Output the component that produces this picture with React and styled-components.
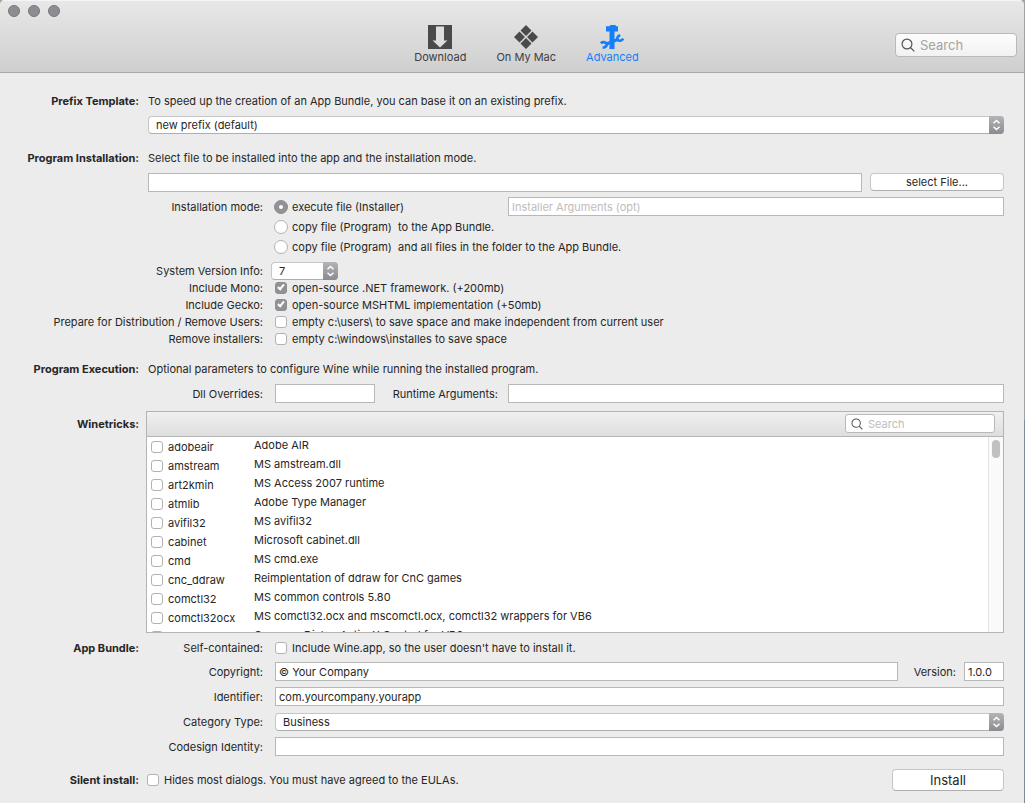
import React, { useState } from "react";
import styled, { createGlobalStyle, css } from "styled-components";

const TRICKS = [
    ["adobeair", "Adobe AIR"],
    ["amstream", "MS amstream.dll"],
    ["art2kmin", "MS Access 2007 runtime"],
    ["atmlib", "Adobe Type Manager"],
    ["avifil32", "MS avifil32"],
    ["cabinet", "Microsoft cabinet.dll"],
    ["cmd", "MS cmd.exe"],
    ["cnc_ddraw", "Reimplentation of ddraw for CnC games"],
    ["comctl32", "MS common controls 5.80"],
    ["comctl32ocx", "MS comctl32.ocx and mscomctl.ocx, comctl32 wrappers for VB6"],
    ["comdlg32ocx", "Common Dialog ActiveX Control for VB6"],
];

const DownloadIcon = () => (
    <svg width="24" height="24" viewBox="0 0 24 24" aria-hidden="true">
        <rect width="24" height="24" fill="#4a4a4a" />
        <path d="M8 1.500h8v14h3.500L12 22.500 4.500 15.500H8z" fill="#dedede" />
    </svg>
);

const MacIcon = () => (
    <svg width="24" height="24" viewBox="0 0 24 24" aria-hidden="true">
        <path
            d="M12 0l5.500 5.500L12 11 6.500 5.500zM5.500 6.500L11 12l-5.500 5.500L0 12zM18.500 6.500L24 12l-5.500 5.500L13 12zM12 13l5.500 5.500L12 24l-5.500-5.500z"
            fill="#4a4a4a"
        />
    </svg>
);

const AdvancedIcon = () => (
    <svg width="24" height="24" viewBox="0 0 24 24" fill="none" stroke="#157efb" aria-hidden="true">
        <path d="M6 1.200h3.500L10.500 0h5l.5 1.200h2V6.500h-3.500V24h-5V6.500H6z" fill="#157efb" stroke="none" />
        <path d="M6.500 19L17.500 14.500" strokeWidth="3" />
        <path d="M.8 18.300C2.500 16.600 5.600 16.600 6.400 18.800S5.500 22.600 2.600 22.700" strokeWidth="2.600" />
        <path d="M20.300 10.200C17.800 10.700 16.800 12.800 17.800 14.600S21.500 16.300 23.200 13.600" strokeWidth="2.600" />
    </svg>
);

const SearchIcon = ({ size }) => (
    <svg width={size} height={size} viewBox="0 0 14 14" fill="none" stroke="#555" strokeWidth="1.2" aria-hidden="true">
        <circle cx="6" cy="6" r="4.900" />
        <path d="M9.500 9.500L13.300 13.300" />
    </svg>
);

const Popup = ({ children, ...props }) => (
    <PopupWrap>
        <select {...props}>{children}</select>
        <PopupArrows>
            <svg width="9" height="12" viewBox="0 0 9 12" fill="none" stroke="#fff" strokeWidth="1.500" aria-hidden="true">
                <path d="M1.500 4.300L4.500 1.500l3 2.800M1.500 7.700l3 2.800 3-2.800" />
            </svg>
        </PopupArrows>
    </PopupWrap>
);

const App = () => {
    const [tab, setTab] = useState("advanced");
    const [mode, setMode] = useState("execute");

    return (
        <Window>
            <GlobalStyle />
            <TitleBar>
                <Lights>
                    <Light aria-label="Close" />
                    <Light aria-label="Minimize" />
                    <Light aria-label="Zoom" />
                </Lights>
                <Toolbar>
                    <Tools>
                        <Tool $active={tab === "download"} onClick={() => setTab("download")}>
                            <DownloadIcon />
                            Download
                        </Tool>
                        <Tool $active={tab === "mac"} onClick={() => setTab("mac")}>
                            <MacIcon />
                            On My Mac
                        </Tool>
                        <Tool $active={tab === "advanced"} onClick={() => setTab("advanced")}>
                            <AdvancedIcon />
                            Advanced
                        </Tool>
                    </Tools>
                    <SearchBox>
                        <SearchIcon size={14} />
                        <input type="search" placeholder="Search" aria-label="Search" />
                    </SearchBox>
                </Toolbar>
            </TitleBar>

            <Form onSubmit={(e) => e.preventDefault()}>
                <TitleRow>
                    <Title as="label" htmlFor="template">Prefix Template:</Title>
                    <p>To speed up the creation of an App Bundle, you can base it on an existing prefix.</p>
                </TitleRow>
                <WideRow $top={4}>
                    <Popup id="template">
                        <option>new prefix (default)</option>
                    </Popup>
                </WideRow>

                <TitleRow $top={13}>
                    <Title as="label" htmlFor="file">Program Installation:</Title>
                    <p>Select file to be installed into the app and the installation mode.</p>
                </TitleRow>
                <WideRow $top={5}>
                    <FileLine>
                        <TextField id="file" type="text" />
                        <Button type="button">select File...</Button>
                    </FileLine>
                </WideRow>

                <FieldRow $top={4}>
                    <Label as="span">Installation mode:</Label>
                    <ModeLine>
                        <Check>
                            <Radio name="mode" checked={mode === "execute"} onChange={() => setMode("execute")} />
                            execute file (Installer)
                        </Check>
                        <TextField type="text" placeholder="Installer Arguments (opt)" aria-label="Installer Arguments" />
                    </ModeLine>
                </FieldRow>
                <FieldRow>
                    <Label as="span" />
                    <Check>
                        <Radio name="mode" checked={mode === "copy"} onChange={() => setMode("copy")} />
                        {"copy file (Program)  to the App Bundle."}
                    </Check>
                </FieldRow>
                <FieldRow>
                    <Label as="span" />
                    <Check>
                        <Radio name="mode" checked={mode === "folder"} onChange={() => setMode("folder")} />
                        {"copy file (Program)  and all files in the folder to the App Bundle."}
                    </Check>
                </FieldRow>

                <FieldRow $top={4} $gap={8}>
                    <Label htmlFor="version-info">System Version Info:</Label>
                    <Narrow>
                        <Popup id="version-info">
                            <option>7</option>
                        </Popup>
                    </Narrow>
                </FieldRow>
                <Options>
                    <FieldRow $dense>
                        <Label htmlFor="mono">Include Mono:</Label>
                        <Check><Box id="mono" defaultChecked />open-source .NET framework. (+200mb)</Check>
                    </FieldRow>
                    <FieldRow $dense>
                        <Label htmlFor="gecko">Include Gecko:</Label>
                        <Check><Box id="gecko" defaultChecked />open-source MSHTML implementation (+50mb)</Check>
                    </FieldRow>
                    <FieldRow $dense>
                        <Label htmlFor="users">Prepare for Distribution / Remove Users:</Label>
                        <Check><Box id="users" />{"empty c:\\users\\ to save space and make independent from current user"}</Check>
                    </FieldRow>
                    <FieldRow $dense>
                        <Label htmlFor="installers">Remove installers:</Label>
                        <Check><Box id="installers" />{"empty c:\\windows\\installes to save space"}</Check>
                    </FieldRow>
                </Options>

                <TitleRow $top={12}>
                    <Title>Program Execution:</Title>
                    <p>Optional parameters to configure Wine while running the installed program.</p>
                </TitleRow>
                <FieldRow $top={5}>
                    <Label htmlFor="dll">Dll Overrides:</Label>
                    <ExecLine>
                        <TextField id="dll" type="text" />
                        <Label htmlFor="runtime">Runtime Arguments:</Label>
                        <TextField id="runtime" type="text" />
                    </ExecLine>
                </FieldRow>

                <TitleRow $top={7} $gap={7} $align="start">
                    <TricksTitle>Winetricks:</TricksTitle>
                    <Tricks>
                        <TricksHead>
                            <SearchBox $small>
                                <SearchIcon size={12} />
                                <input type="search" placeholder="Search" aria-label="Search winetricks" />
                            </SearchBox>
                        </TricksHead>
                        <TricksBody>
                            <TricksTable>
                                <tbody>
                                    {TRICKS.map(([name, text]) => (
                                        <tr key={name}>
                                            <td><Check><Box />{name}</Check></td>
                                            <td>{text}</td>
                                        </tr>
                                    ))}
                                </tbody>
                            </TricksTable>
                            <Track><Thumb /></Track>
                        </TricksBody>
                    </Tricks>
                </TitleRow>

                <BundleRow $top={5}>
                    <Title>App Bundle:</Title>
                    <Label htmlFor="self">Self-contained:</Label>
                    <Check><Box id="self" />Include Wine.app, so the user doesn't have to install it.</Check>
                </BundleRow>
                <FieldRow $top={4}>
                    <Label htmlFor="copyright">Copyright:</Label>
                    <VersionLine>
                        <TextField id="copyright" type="text" defaultValue="© Your Company" />
                        <Label htmlFor="version">Version:</Label>
                        <TextField id="version" type="text" defaultValue="1.0.0" />
                    </VersionLine>
                </FieldRow>
                <FieldRow $top={5}>
                    <Label htmlFor="identifier">Identifier:</Label>
                    <TextField id="identifier" type="text" defaultValue="com.yourcompany.yourapp" />
                </FieldRow>
                <FieldRow $top={5}>
                    <Label htmlFor="category">Category Type:</Label>
                    <Popup id="category">
                        <option>Business</option>
                    </Popup>
                </FieldRow>
                <FieldRow $top={5}>
                    <Label htmlFor="codesign">Codesign Identity:</Label>
                    <TextField id="codesign" type="text" />
                </FieldRow>

                <TitleRow $top={12} $gap={8}>
                    <Title as="label" htmlFor="silent">Silent install:</Title>
                    <InstallLine>
                        <Check><Box id="silent" />Hides most dialogs. You must have agreed to the EULAs.</Check>
                        <Button type="submit" $large>Install</Button>
                    </InstallLine>
                </TitleRow>
            </Form>
        </Window>
    );
};

export default App;

const GlobalStyle = createGlobalStyle`
    * {
        box-sizing: border-box;
    }
    body {
        margin: 0;
        background: linear-gradient(#a3a3a3 420px, #7d8b9b 420px);
        color: #262626;
        font: 11px/14px Inter, "Liberation Sans", sans-serif;
    }
    p {
        margin: 0;
    }
    button, input, select {
        font: inherit;
        color: inherit;
    }
`;

const Window = styled.div`
    margin-right: 1px;
    min-height: 100vh;
    background: #ececec;
    border-radius: 5px 5px 0 0;
    overflow: hidden;
`;

const TitleBar = styled.header`
    padding-bottom: 8px;
    background: linear-gradient(#e8e8e8, #cfcfcf);
    border-bottom: 1px solid #a8a8a8;
    box-shadow: inset 0 1px #f6f6f6;
`;

const Lights = styled.div`
    display: flex;
    gap: 8px;
    height: 25px;
    padding: 5px 8px;
`;

const Light = styled.button`
    width: 12px;
    height: 12px;
    padding: 0;
    border: 1px solid #77767b;
    border-radius: 50%;
    background: #8e8d92;
`;

const Toolbar = styled.div`
    display: grid;
    grid-template-columns: 1fr auto 1fr;
    align-items: center;
    padding: 0 7px 0 36px;
`;

const Tools = styled.nav`
    grid-column: 2;
    display: flex;
    gap: 30px;
`;

const Tool = styled.button`
    display: flex;
    flex-direction: column;
    align-items: center;
    gap: 1px;
    padding: 0;
    border: 0;
    background: none;
    color: ${({ $active }) => ($active ? "#157efb" : "#404040")};
`;

const SearchBox = styled.div`
    justify-self: end;
    display: flex;
    align-items: center;
    gap: 5px;
    width: ${({ $small }) => ($small ? 150 : 122)}px;
    height: ${({ $small }) => ($small ? 19 : 24)}px;
    padding: 0 5px;
    border: 1px solid #b9b9b9;
    border-radius: ${({ $small }) => ($small ? 3 : 4)}px;
    background: ${({ $small }) => ($small ? "#fff" : "linear-gradient(#fdfdfd, #f2f2f2)")};

    svg {
        flex: none;
    }
    input {
        min-width: 0;
        flex: 1;
        padding: 0;
        border: 0;
        outline: 0;
        background: none;
        font-size: ${({ $small }) => ($small ? 11 : 13)}px;
    }
    input::placeholder {
        color: ${({ $small }) => ($small ? "#bdbdbd" : "#a3a3a3")};
    }
`;

const Form = styled.form`
    padding: 18px 20px 12px 0;
`;

const Row = styled.div`
    display: grid;
    align-items: ${({ $align }) => $align || "center"};
    min-height: ${({ $dense }) => ($dense ? 17 : 20)}px;
    margin-top: ${({ $top }) => $top || 0}px;
`;

const TitleRow = styled(Row)`
    grid-template-columns: 139px 1fr;
    column-gap: ${({ $gap }) => $gap || 9}px;
`;

const WideRow = styled(Row)`
    padding-left: 148px;
`;

const FieldRow = styled(Row)`
    grid-template-columns: 263px 1fr;
    column-gap: ${({ $gap }) => $gap || 12}px;
`;

const BundleRow = styled(Row)`
    grid-template-columns: 139px 112px 1fr;
    column-gap: 12px;
`;

const Title = styled.span`
    font-weight: 700;
    text-align: right;
    white-space: nowrap;
`;

const TricksTitle = styled(Title)`
    padding-top: 6px;
`;

const Label = styled.label`
    text-align: right;
    white-space: nowrap;
`;

const Options = styled.div`
    margin-top: -2px;
`;

const Narrow = styled.div`
    width: 67px;
`;

const FileLine = styled.div`
    display: grid;
    grid-template-columns: 1fr 134px;
    column-gap: 8px;
    align-items: start;
`;

const ModeLine = styled.div`
    display: grid;
    grid-template-columns: 221px 1fr;
    column-gap: 12px;
    align-items: center;
`;

const ExecLine = styled.div`
    display: grid;
    grid-template-columns: 100px 113px 1fr;
    column-gap: 10px;
    align-items: center;
`;

const VersionLine = styled.div`
    display: grid;
    grid-template-columns: 1fr 50px 40px;
    column-gap: 8px;
    align-items: center;
`;

const InstallLine = styled.div`
    display: flex;
    align-items: center;
    justify-content: space-between;
`;

const TextField = styled.input`
    width: 100%;
    min-width: 0;
    height: 19px;
    margin: 0 0 1px;
    padding: 0 3px;
    border: 1px solid #b8b8b8;
    border-radius: 0;
    background: #fff;

    &::placeholder {
        color: #bdbdbd;
    }
`;

const Button = styled.button`
    width: ${({ $large }) => ($large ? "112px" : "100%")};
    height: ${({ $large }) => ($large ? 22 : 18)}px;
    padding: 0;
    border: 1px solid #c6c6c6;
    border-bottom-color: #aeaeae;
    border-radius: 4px;
    background: #fff;
    font-size: ${({ $large }) => ($large ? 13 : 11)}px;
`;

const PopupWrap = styled.div`
    display: grid;
    grid-template-columns: 1fr 15px;
    height: 18px;

    select {
        grid-area: 1 / 1 / 2 / 3;
        appearance: none;
        width: 100%;
        padding: 0 20px 0 7px;
        border: 1px solid #c6c6c6;
        border-bottom-color: #aeaeae;
        border-radius: 4px;
        background: #fff;
    }
`;

const PopupArrows = styled.span`
    grid-area: 1 / 2;
    display: flex;
    align-items: center;
    justify-content: center;
    border-radius: 0 4px 4px 0;
    background: linear-gradient(#b4b3b8, #8c8b90);
    pointer-events: none;
`;

const Check = styled.label`
    display: flex;
    align-items: center;
    gap: 5px;
    white-space: pre;
`;

const marked = css`
    appearance: none;
    flex: none;
    display: grid;
    place-items: center;
    margin: 0;
    border: 1px solid #b2b2b2;
    background: #fff;

    &:checked {
        border-color: #8e8d92;
        background: #929196;
    }
`;

const Radio = styled.input.attrs({ type: "radio" })`
    ${marked}
    width: 14px;
    height: 14px;
    margin: 0 -1px;
    border-radius: 50%;

    &:checked::after {
        content: "";
        width: 4px;
        height: 4px;
        border-radius: 50%;
        background: #fff;
    }
`;

const Box = styled.input.attrs({ type: "checkbox" })`
    ${marked}
    width: 12px;
    height: 12px;
    border-radius: 3px;

    &:checked::after {
        content: "";
        width: 2px;
        height: 5px;
        margin-bottom: 2px;
        border: solid #fff;
        border-width: 0 2px 2px 0;
        transform: rotate(40deg);
    }
`;

const Tricks = styled.div`
    border: 1px solid #b4b4b4;
`;

const TricksHead = styled.div`
    display: flex;
    align-items: flex-start;
    justify-content: flex-end;
    height: 25px;
    padding: 2px 8px 0 0;
    border-bottom: 1px solid #b4b4b4;
    background: linear-gradient(#f0f0f0, #dedede);
`;

const TricksBody = styled.div`
    display: grid;
    grid-template-columns: 1fr 15px;
    height: 195px;
    overflow: hidden;
    background: #fff;
`;

const TricksTable = styled.table`
    width: 100%;
    table-layout: fixed;
    border-collapse: collapse;
    align-self: start;

    tr {
        height: 19px;
    }
    td {
        padding: 0;
        white-space: nowrap;
    }
    td:first-child {
        width: 107px;
        padding: 1px 0 0 4px;
    }
    td:last-child {
        padding-bottom: 4px;
    }
`;

const Track = styled.div`
    padding: 3px;
    border-left: 1px solid #e4e4e4;
    background: #fafafa;
`;

const Thumb = styled.div`
    width: 8px;
    height: 18px;
    border-radius: 4px;
    background: #c1c1c1;
`;
